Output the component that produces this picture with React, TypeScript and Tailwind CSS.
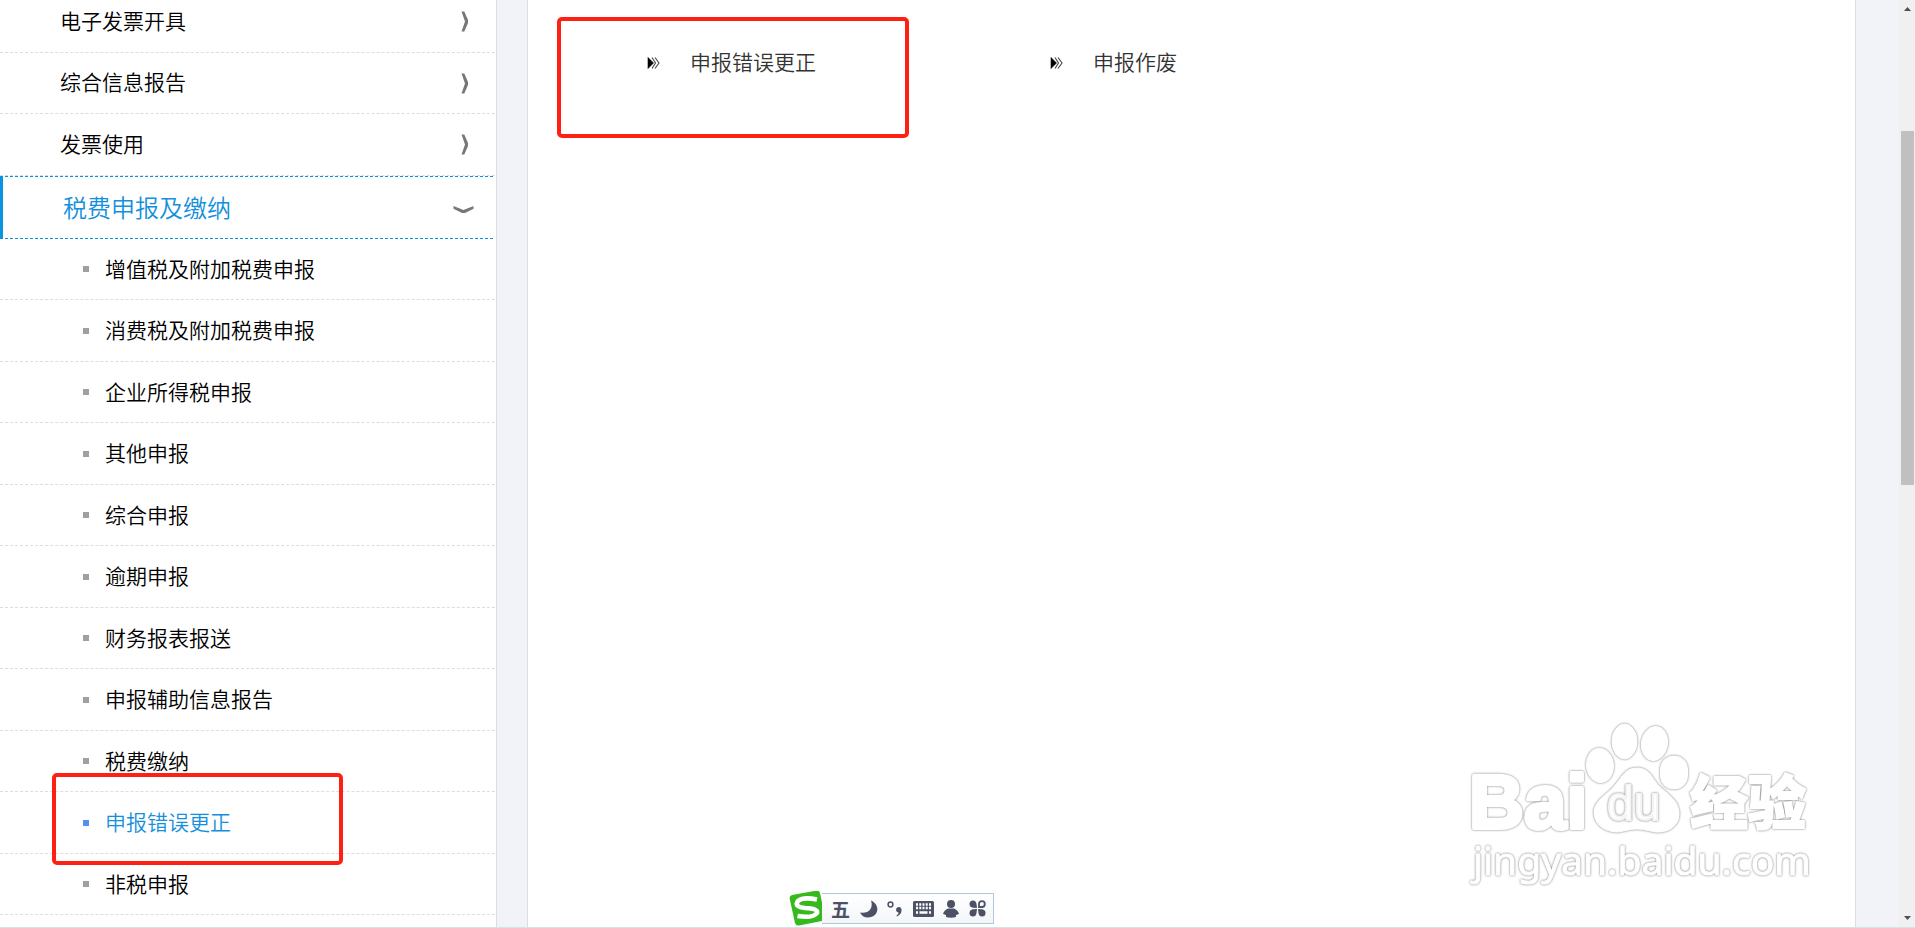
import React, { useState } from 'react';

const TOP_MENU = ['电子发票开具', '综合信息报告', '发票使用'];

const SUB_MENU = [
  '增值税及附加税费申报',
  '消费税及附加税费申报',
  '企业所得税申报',
  '其他申报',
  '综合申报',
  '逾期申报',
  '财务报表报送',
  '申报辅助信息报告',
  '税费缴纳',
  '申报错误更正',
  '非税申报',
];

const SERVICES = ['申报错误更正', '申报作废'];

const ChevronRight = () => (
  <svg className="h-[21px] w-[9px]" viewBox="0 0 9 21" fill="#777">
    <path d="M0.5 0.500 H3.300 L7 9 V12 L3.300 20.500 H0.500 L4 10.500 Z" />
  </svg>
);

const ChevronDown = () => (
  <svg className="h-[9px] w-[21px]" viewBox="0 0 21 9" fill="#777">
    <path d="M0.500 1 V3.800 L9 8 H12 L20.500 3.800 V1 L10.500 5 Z" />
  </svg>
);

const DoubleArrow = () => (
  <svg className="h-[12px] w-[13px]" viewBox="0 0 13 12" fill="none">
    <path d="M1 0.500 L6.500 6 L1 11.500 Z" fill="#000" stroke="#000" strokeWidth="0.600" />
    <path d="M5 0.500 L8.500 6 L5 11.500 M8 0.500 L12 6 L8 11.500" stroke="#444" strokeWidth="1.100" />
  </svg>
);

const Sidebar: React.FC = () => {
  const [active, setActive] = useState('申报错误更正');

  return (
    <nav className="relative w-[497px] shrink-0 border-r border-[#dcdee2] bg-white pr-px text-[21px] text-black">
      {/* the list is scrolled slightly past its first row */}
      <ul className="-mt-[9px]">
        {TOP_MENU.map((name) => (
          <li key={name} className="odd:h-[62px] even:h-[61px] border-b border-dashed border-[#ddd]">
            <button className="flex h-full w-full items-center justify-between pl-[60px] pr-[25px]">
              <span className="pb-[2px]">{name}</span>
              <ChevronRight />
            </button>
          </li>
        ))}
      </ul>

      <button className="mr-[2px] flex h-[63px] w-[493px] items-center justify-between border-y border-l-[3px] border-y-[#0b93e0] border-l-[#0b93e0] [border-block-style:dashed] pl-[60px] pr-[19px] text-[24px] text-[#1590dd]">
        <span className="pb-[2px]">税费申报及缴纳</span>
        <span className="pt-1">
          <ChevronDown />
        </span>
      </button>

      <ul>
        {SUB_MENU.map((name) => (
          <li key={name} className="odd:h-[61px] even:h-[62px] border-b border-dashed border-[#ddd]">
            <a
              href="#"
              onClick={() => setActive(name)}
              className={`flex h-full items-center gap-4 pl-[83px] ${active === name ? 'text-[#1590dd]' : 'text-black'}`}
            >
              <span className={`size-[6px] ${active === name ? 'bg-[#5590ee]' : 'bg-[#a0a0a0]'}`} />
              <span className="pb-px">{name}</span>
            </a>
          </li>
        ))}
      </ul>

      <div className="pointer-events-none absolute left-[52px] top-[773px] h-[92px] w-[291px] rounded-[5px] border-4 border-[#ff2014]" />
    </nav>
  );
};

const Watermark = () => (
  <svg
    className="pointer-events-none absolute bottom-0 right-[15px] h-[228px] w-[400px]"
    viewBox="0 -1 400 228"
    fill="#fff"
    stroke="#fff"
    strokeLinejoin="round"
  >
    <g className="drop-shadow-[0_0_1px_#777]" strokeWidth="1">
      <ellipse cx="160" cy="65.500" rx="13.500" ry="17" transform="rotate(-6 160 65.500)" />
      <ellipse cx="184.500" cy="41.500" rx="12.500" ry="17.500" />
      <ellipse cx="214.500" cy="43.500" rx="13" ry="17" transform="rotate(10 214.500 43.500)" />
      <rect x="220.500" y="56" width="27" height="33" rx="13" />
      <path d="M197 68 C206 68 210 73 215 81 C221 91 238 97 239 112 C240 126 228 133 216 132 C208 131 205 129 197 129 C189 129 186 131 178 132 C164 132 154 124 154 112 C155 99 168 95 176 84 C183 75 186 68 197 68 Z" />
    </g>
    <text x="29" y="128" fontSize="76" fontWeight="700" strokeWidth="4" className="font-['Liberation_Sans'] drop-shadow-[0_0_1px_#777]">Bai</text>
    <text x="167" y="120" fontSize="48" fontWeight="400" strokeWidth="2" stroke="#f4f4f4" className="font-['Liberation_Sans'] drop-shadow-[0_0_1px_#777]">du</text>
    <text x="250" y="124" fontSize="58" fontWeight="900" strokeWidth="2" className="font-['Noto_Sans_CJK_SC'] drop-shadow-[0_0_1px_#777]">经验</text>
    <text x="33" y="175" fontSize="39" fontWeight="400" strokeWidth="1" className="font-['Noto_Sans'] drop-shadow-[0_0_1px_#777]">jingyan.baidu.com</text>
  </svg>
);

const InputMethodBar = () => (
  <div className="absolute bottom-[3px] left-[789px] flex h-[31px] w-[205px] items-center">
    <svg className="h-[36px] w-[37px] shrink-0" viewBox="0 1 37 36">
      <path d="M3 5 L28 0.500 Q30 0.500 31 3 L36 27 Q36 30 33 31 L10 35.500 Q7 36 6 33 L0.500 8 Q0.500 6 3 5 Z" fill="#35b91c" />
      <path d="M28 9.500 Q13 6.500 8.500 11.500 Q5.500 17 16 18 Q29.500 18.500 28 23 Q24 28.500 8.500 26" fill="none" stroke="#fff" strokeWidth="4.600" />
    </svg>
    <div className="-ml-1 flex h-full flex-1 items-center justify-between border border-l-0 border-[#b5c6d6] bg-gradient-to-b from-white to-[#f3f6f9] pl-[9px] pr-[7px] text-[#4c5166]">
      <span className="text-[19px] font-bold leading-none">五</span>
      <svg className="h-[18px] w-[18px]" viewBox="0 0 18 18" fill="currentColor">
        <path d="M11 0.500 C21 5 18.500 17.500 8 17.500 C4 17.500 1.500 15.500 0 12.500 C9 14 13.500 8 11 0.500 Z" />
      </svg>
      <svg className="h-[16px] w-[16px]" viewBox="0 0 16 16">
        <circle cx="3.500" cy="3.500" r="2.400" fill="none" stroke="currentColor" strokeWidth="1.500" />
        <path d="M12 6 C15.500 6 16 13 10 15.500 L9.500 14.500 Q12 13 11.500 11.500 C8 11 8.500 6 12 6 Z" fill="currentColor" />
      </svg>
      <svg className="h-[16px] w-[21px]" viewBox="0 0 21 16">
        <rect width="21" height="16" rx="1.500" fill="currentColor" />
        <path d="M3 3.500 H18 M3 7 H18" stroke="#fff" strokeWidth="2.400" strokeDasharray="2 1.250" />
        <path d="M3 11.500 H5 M6.500 11.500 H14.500 M16 11.500 H18" stroke="#fff" strokeWidth="2.400" />
      </svg>
      <svg className="h-[18px] w-[16px]" viewBox="0 0 16 18" fill="currentColor">
        <circle cx="8" cy="4" r="4" />
        <path d="M5 8.500 H11 Q15 10 16 14 L13 15 V17 Q8 18.500 3 17 V15 L0 14 Q1 10 5 8.500 Z" />
      </svg>
      <svg className="h-[17px] w-[17px]" viewBox="0 0 17 17" fill="currentColor">
        <path d="M4 0.500 Q7 0.500 7.500 4 L8 8 L4 7.700 Q0.500 7 0.500 4 Q0.500 0.500 4 0.500 Z" />
        <path d="M4 16.500 Q7 16.500 7.500 13 L8 9 L4 9.300 Q0.500 10 0.500 13 Q0.500 16.500 4 16.500 Z" />
        <path d="M13 16.500 Q10 16.500 9.500 13 L9 9 L13 9.300 Q16.500 10 16.500 13 Q16.500 16.500 13 16.500 Z" />
        <path d="M10 7 V4 Q10 1.200 13 1.200 Q15.800 1.200 15.800 4 Q15.800 7 13 7 Z" fill="none" stroke="currentColor" strokeWidth="1.800" />
      </svg>
    </div>
  </div>
);

const ScrollBar = () => (
  <div className="flex w-4 shrink-0 flex-col items-center bg-[#f0f0f0]" aria-hidden="true">
    <svg className="mt-[7px] h-[4px] w-[7px]" viewBox="0 0 7 4" fill="#505050">
      <path d="M0 4 L3.500 0 L7 4 Z" />
    </svg>
    <div className="mt-[120px] h-[354px] w-[13px] bg-[#c0c0c0]" />
    <svg className="mb-[7px] mt-auto h-[4px] w-[7px]" viewBox="0 0 7 4" fill="#505050">
      <path d="M0 0 L3.500 4 L7 0 Z" />
    </svg>
  </div>
);

export default function App() {
  return (
    <div className="relative flex min-h-screen flex-col overflow-hidden border-b border-[#cfe6e6] bg-[#f1f3f8] font-['Noto_Sans_CJK_SC',sans-serif] font-[350]">
      <div className="flex flex-1">
        <Sidebar />

        <main className="relative ml-[30px] mr-[43px] flex-1 border-x border-[#dcdee2] bg-white">
          <ul className="flex pl-[119px] pt-[42px] text-[21px] text-[#333]">
            {SERVICES.map((name) => (
              <li key={name} className="w-[403px]">
                <a href="#" className="flex h-[42px] items-center gap-[30px]">
                  <DoubleArrow />
                  <span className="pb-[2px]">{name}</span>
                </a>
              </li>
            ))}
          </ul>
          <div className="pointer-events-none absolute left-[29px] top-[17px] h-[121px] w-[352px] rounded-[5px] border-4 border-[#ff2014]" />
          <Watermark />
        </main>

        <ScrollBar />
      </div>
      <InputMethodBar />
    </div>
  );
}
